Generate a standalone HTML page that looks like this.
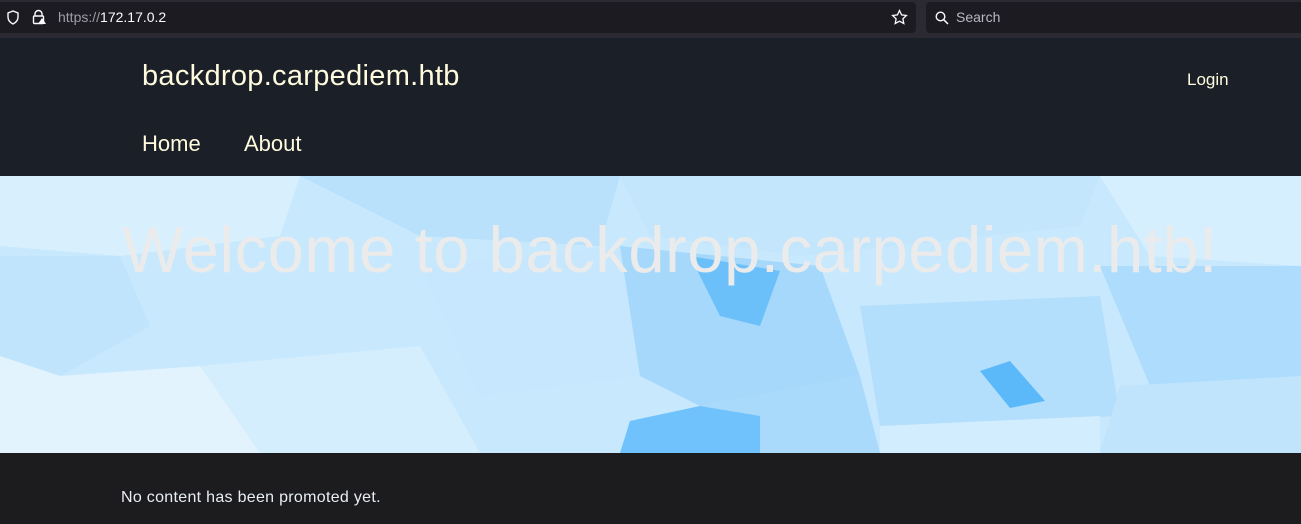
<!DOCTYPE html>
<html><head><style>
*{margin:0;padding:0;box-sizing:border-box}
body{width:1301px;height:524px;overflow:hidden;background:#1c1c1f;font-family:"Liberation Sans","DejaVu Sans",sans-serif}
.bar{height:38px;background:#2b2a33;position:relative}
.url{position:absolute;left:0;top:2px;width:916px;height:31px;background:#1c1b22;border-radius:0 4px 4px 0;color:#fbfbfe;font-size:14px;line-height:31px}
.srch{position:absolute;left:926px;top:2px;width:375px;height:31px;background:#1c1b22;border-radius:4px 0 0 4px;color:#b8b8c0;font-size:14px;line-height:31px;padding-left:30px}
.hdr{position:absolute;top:38px;left:0;width:1301px;height:138px;background:#1b1f27;color:#fffbde}
.hero{position:absolute;top:176px;left:0;width:1301px;height:277px;overflow:hidden;background:#c8e8fd}
.hero svg{position:absolute;left:0;top:0}
.hero h1{position:absolute;left:122px;top:36px;font-weight:normal;font-size:65px;color:#ebebeb;white-space:nowrap;letter-spacing:0.6px}
.foot{position:absolute;top:453px;left:0;width:1301px;height:71px;background:#1c1c1f;color:#e8eef4;font-size:16px}
</style></head><body>
<div class="bar">
<div class="url">
<svg style="position:absolute;left:6px;top:8px" width="14" height="15" viewBox="0 0 14 15"><path d="M7 1L2 3v4c0 3 2 5.5 5 7 3-1.5 5-4 5-7V3z" fill="none" stroke="#fbfbfe" stroke-width="1.4"/></svg>
<svg style="position:absolute;left:31px;top:7px" width="16" height="16" viewBox="0 0 16 16"><path d="M4 7V5a3.5 3.5 0 017 0v2" fill="none" stroke="#fbfbfe" stroke-width="1.4"/><rect x="2.5" y="7" width="10" height="7.5" rx="1" fill="none" stroke="#fbfbfe" stroke-width="1.4"/><path d="M11 9l4 6h-8z" fill="#fbfbfe"/></svg>
<span style="position:absolute;left:58px"><span style="color:#9d9da6">https://</span>172.17.0.2</span>
<svg style="position:absolute;left:891px;top:7px" width="17" height="17" viewBox="0 0 17 17"><path d="M8.5 1.5l2.1 4.4 4.8.6-3.5 3.3.9 4.7-4.3-2.3-4.3 2.3.9-4.7L1.6 6.5l4.8-.6z" fill="none" stroke="#fbfbfe" stroke-width="1.3"/></svg>
</div>
<div class="srch"><svg style="position:absolute;left:9px;top:9px" width="14" height="14" viewBox="0 0 14 14"><circle cx="5.5" cy="5.5" r="4.3" fill="none" stroke="#fbfbfe" stroke-width="1.4"/><path d="M8.7 8.7L13 13" stroke="#fbfbfe" stroke-width="1.5"/></svg>Search</div>
</div>
<div class="hdr">
<div style="position:absolute;left:142px;top:22px;font-size:29px;letter-spacing:0.3px">backdrop.carpediem.htb</div>
<div style="position:absolute;left:1187px;top:32px;font-size:17px">Login</div>
<div style="position:absolute;left:142px;top:93px;font-size:22px">Home</div>
<div style="position:absolute;left:244px;top:93px;font-size:22px">About</div>
</div>
<div class="hero">
<svg width="1301" height="277">
<polygon points="0,0 300,0 280,60 120,80 0,70" fill="#d8f0fe"/>
<polygon points="300,0 620,0 600,70 420,60" fill="#b9e1fc"/>
<polygon points="620,0 1100,0 1080,50 800,80 650,60" fill="#c3e6fd"/>
<polygon points="1100,0 1301,0 1301,90 1150,80" fill="#d6effe"/>
<polygon points="0,80 120,80 150,150 60,200 0,180" fill="#bfe4fc"/>
<polygon points="0,180 60,200 200,190 260,277 0,277" fill="#e2f3fe"/>
<polygon points="200,190 420,170 480,277 260,277" fill="#d4eefe"/>
<polygon points="420,90 620,70 640,200 480,220" fill="#c6e7fd"/>
<polygon points="620,70 820,90 860,200 700,230 640,200" fill="#a6d8fb"/>
<polygon points="690,80 780,95 760,150 720,140" fill="#6cc0fa"/>
<polygon points="700,230 860,200 880,277 620,277" fill="#a9dafb"/>
<polygon points="630,245 700,230 760,240 760,277 620,277" fill="#6fc2fb"/>
<polygon points="860,130 1100,120 1120,240 880,250" fill="#b3defc"/>
<polygon points="980,195 1010,185 1045,225 1010,232" fill="#5bb9f9"/>
<polygon points="1100,90 1301,90 1301,200 1150,210" fill="#aedcfc"/>
<polygon points="1120,210 1301,200 1301,277 1100,277" fill="#bfe4fc"/>
<polygon points="880,250 1100,240 1100,277 880,277" fill="#d2edfe"/>
</svg>
<h1>Welcome to backdrop.carpediem.htb!</h1></div>
<div class="foot"><div style="position:absolute;left:121px;top:36px;letter-spacing:0.3px">No content has been promoted yet.</div></div>
</body></html>
